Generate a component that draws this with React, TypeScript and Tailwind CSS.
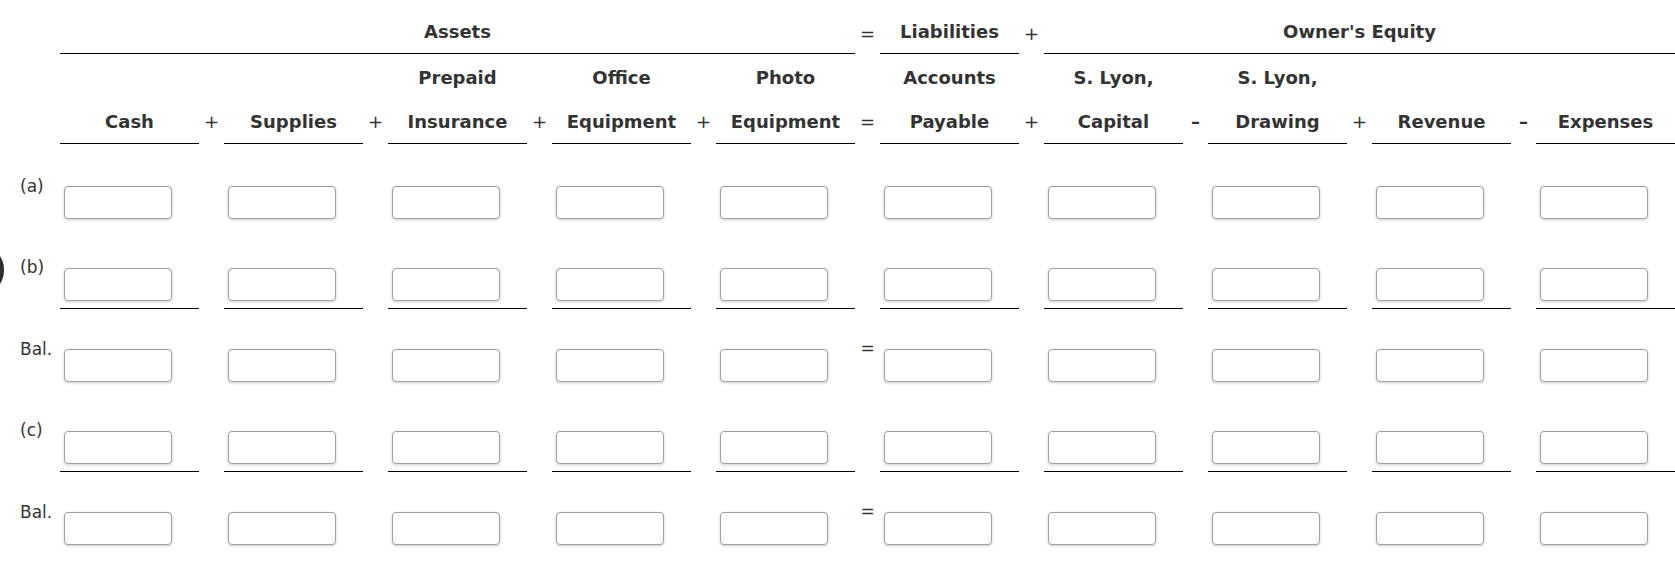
import React from "react";

const cols = [
  { l1: "", l2: "Cash" },
  { l1: "", l2: "Supplies" },
  { l1: "Prepaid", l2: "Insurance" },
  { l1: "Office", l2: "Equipment" },
  { l1: "Photo", l2: "Equipment" },
  { l1: "Accounts", l2: "Payable" },
  { l1: "S. Lyon,", l2: "Capital" },
  { l1: "S. Lyon,", l2: "Drawing" },
  { l1: "", l2: "Revenue" },
  { l1: "", l2: "Expenses" },
];
const ops = ["+", "+", "+", "+", "=", "+", "–", "+", "–"];

const rows = [
  { label: "(a)", underline: false, eq: false },
  { label: "(b)", underline: true, eq: false },
  { label: "Bal.", underline: false, eq: true },
  { label: "(c)", underline: true, eq: false },
  { label: "Bal.", underline: false, eq: true },
];

const gridCls = "grid grid-cols-[60px_repeat(9,139px_25px)_139px]";

function Row({ label, underline, eq }: { label: string; underline: boolean; eq: boolean }) {
  const cells: React.ReactNode[] = [];
  cells.push(
    <div key="lbl" className="pt-[30px] pl-[20px] text-[17px] leading-[20px] text-[#333]">
      {label}
    </div>
  );
  cols.forEach((_, i) => {
    cells.push(
      <div
        key={"c" + i}
        className={
          "pt-[40.5px] pb-[7px] border-b " + (underline ? "border-black" : "border-transparent")
        }
      >
        <div className="ml-[4px] w-[108px] h-[33px] rounded-[4px] border border-[#a0a0a0] bg-white shadow-[0_1px_3px_rgba(0,0,0,0.2)]" />
      </div>
    );
    if (i < ops.length) {
      cells.push(
        <div key={"o" + i} className="pt-[29.5px] text-center text-[17px] leading-[20px] text-[#333]">
          {eq && i === 4 ? "=" : ""}
        </div>
      );
    }
  });
  return <div className={gridCls}>{cells}</div>;
}

export default function App() {
  return (
    <div
      className="relative w-[1675px] h-[573px] bg-white overflow-hidden text-[#333]"
      style={{ fontFamily: '"DejaVu Sans", Verdana, sans-serif' }}
    >
      <div className="absolute left-[-40px] top-[247px] w-[44px] h-[46px] rounded-full bg-[#2d2d2d]" />
      {/* Header row 1 */}
      <div className={gridCls + " h-[54px] text-[18px] leading-[20px] font-bold"}>
        <div />
        <div className="col-span-9 flex items-end justify-center pb-[11px] border-b border-black">
          Assets
        </div>
        <div className="flex items-end justify-center pb-[10px] font-normal">=</div>
        <div className="flex items-end justify-center pb-[11px] border-b border-black">
          Liabilities
        </div>
        <div className="flex items-end justify-center pb-[10px] font-normal">+</div>
        <div className="col-span-7 flex items-end justify-center pb-[11px] border-b border-black">
          Owner's Equity
        </div>
      </div>
      {/* Header row 2 */}
      <div className={gridCls + " text-[18px] leading-[44px]"}>
        <div />
        {cols.map((c, i) => (
          <React.Fragment key={i}>
            <div className="h-[90px] pt-[2px] border-b border-black text-center font-bold whitespace-nowrap">
              <div className="h-[44px]">{c.l1}</div>
              <div className="h-[44px]">{c.l2}</div>
            </div>
            {i < ops.length && (
              <div
                className={
                  "h-[90px] pt-[46px] text-center " + (ops[i] === "–" ? "font-bold" : "")
                }
              >
                {ops[i]}
              </div>
            )}
          </React.Fragment>
        ))}
      </div>
      {/* Body */}
      <div className="pt-[1.5px]">
        {rows.map((r, i) => (
          <Row key={i} {...r} />
        ))}
      </div>
    </div>
  );
}
